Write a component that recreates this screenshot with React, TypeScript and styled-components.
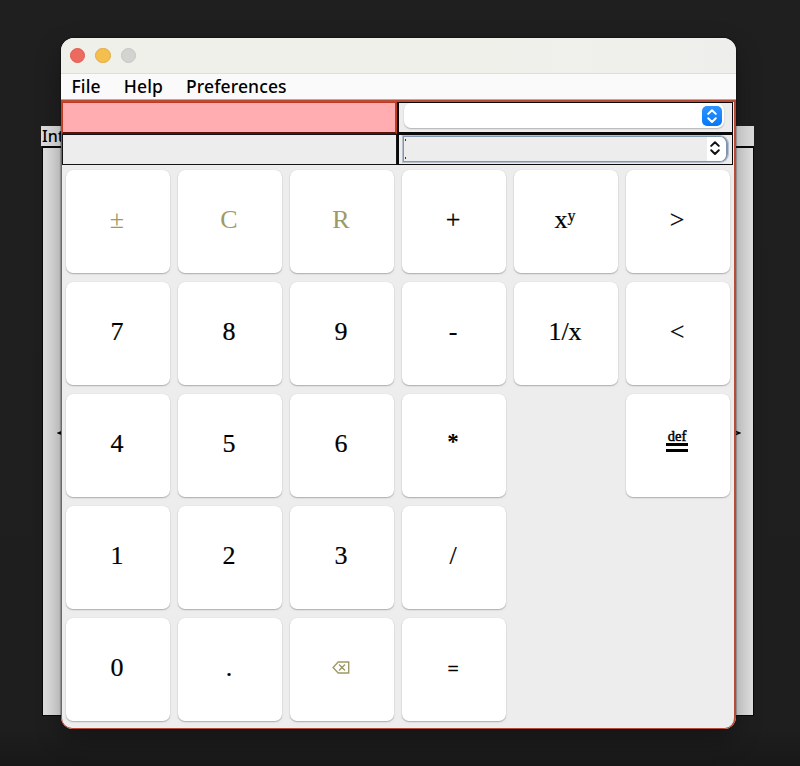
import React from "react";
import styled, { createGlobalStyle } from "styled-components";

const GlobalStyle = createGlobalStyle`
  * { box-sizing: border-box; }
  html, body { margin: 0; background: #1d1d1d; }
`;

const Desktop = styled.div`
  position: relative;
  width: 800px;
  height: 766px;
  padding: 38px 64px 0 61px;
  overflow: hidden;
  background: linear-gradient(#1f1f1f, #1e1e1e 95%, #181818);
  font-family: "Noto Sans", sans-serif;
  color: #000;
`;

/* Partly hidden window lying behind the calculator */
const BackWindow = styled.div`
  position: absolute;
  left: 41px;
  top: 126px;
  width: 713px;
  height: 591px;
`;

const BackTitle = styled.div`
  height: 20px;
  padding-left: 1px;
  background: #dedede;
  font-size: 16px;
  font-weight: 500;
  line-height: 20px;
`;

const BackBody = styled.div`
  display: flex;
  justify-content: space-between;
  align-items: flex-start;
  height: 570px;
  margin: 0 0 0 1px;
  padding: 282px 12px 0 14px;
  border: solid #080808;
  border-width: 2px 1px 1px 1px;
  background: linear-gradient(90deg, #e2e2e2, #d6d6d6 20px, #d6d6d6 690px, #e2e2e2);
`;

const Window = styled.main`
  position: relative;
  width: 675px;
  height: 691px;
  border-radius: 13px 13px 12px 12px;
  overflow: hidden;
  background: #ededed;
`;

const Shadow = styled.div`
  position: relative;
  border-radius: 13px;
  box-shadow: 0 0 1px 1px rgba(0, 0, 0, 0.25), 0 10px 26px rgba(0, 0, 0, 0.3);
`;

const TitleBar = styled.header`
  display: flex;
  align-items: center;
  gap: 10px;
  height: 36px;
  padding-left: 9px;
  background: linear-gradient(90deg, #f0f0eb 65%, #eeeeec);
  border-bottom: 1px solid #dededb;
`;

const Light = styled.span<{ $fill: string; $edge: string }>`
  width: 15.4px;
  height: 15.4px;
  border-radius: 50%;
  background: ${(p) => p.$fill};
  border: 1px solid ${(p) => p.$edge};
`;

const MenuBar = styled.nav`
  display: flex;
  gap: 23px;
  height: 26px;
  padding-left: 10.5px;
  background: #fafafa;
  border-bottom: 1px solid #b5aaa8;
  font-size: 17.5px;
  font-weight: 500;
  line-height: 25px;
  letter-spacing: 0.13px;
`;

const Content = styled.section`
  height: 629px;
  border: solid #b84a38;
  border-width: 2px 2px 1px 1px;
  border-radius: 0 0 11px 11px;
`;

const Fields = styled.div`
  display: grid;
  grid-template-columns: 335px 336px;
  grid-template-rows: 32px 31px;
`;

const ErrorField = styled.div`
  border: 2px solid #c03a22;
  border-top-width: 1px;
  border-bottom: 2px solid #5a1309;
  border-left-width: 1px;
  background: #ffadb0;
`;

const PlainField = styled.div`
  border: 1px solid #161616;
  background: #ededed;
`;

const ComboCell = styled.div<{ $top?: boolean }>`
  border: solid #0a0a0a;
  border-width: ${(p) => (p.$top ? "1px 1px 2px 2px" : "1px 1px 1px 2px")};
  padding: ${(p) => (p.$top ? "0 8px 0 5px" : "1px 4px 0 4px")};
`;

const Combo = styled.div`
  display: flex;
  justify-content: flex-end;
  align-items: center;
  height: 25px;
  padding-right: 2px;
  border-radius: 7px;
  background: #fff;
  box-shadow: 0 1px 1.5px rgba(0, 0, 0, 0.25);
`;

const Knob = styled.span`
  display: flex;
  width: 20px;
  height: 20px;
  border-radius: 5px;
  background: linear-gradient(#2e94ff, #0877f8);
  color: #fff;
`;

const FocusCombo = styled.div`
  display: flex;
  justify-content: space-between;
  height: 26px;
  border: 1px solid #8296af;
  border-right-width: 2px;
  border-radius: 0 8px 8px 0;
  box-shadow: 0 0 0 1px #b5c0ce;
  overflow: hidden;
`;

const Dots = styled.span`
  display: flex;
  flex-direction: column;
  justify-content: space-between;
  padding: 2px 0 2px 1px;
  &::before, &::after {
    content: "";
    width: 1px;
    height: 2px;
    background: #333;
  }
`;

const Stepper = styled.span`
  display: flex;
  align-items: center;
  width: 19px;
  background: #fff;
  color: #111;
  & > svg {
    flex: none;
    margin: -2px 0 0 -2px;
  }
`;

const Keys = styled.div`
  display: grid;
  grid-template-columns: repeat(6, 104px);
  grid-auto-rows: 103px;
  column-gap: 8px;
  row-gap: 9px;
  padding: 5px 0 0 3.5px;
`;

const Key = styled.button<{ $col: number; $row: number; $muted?: boolean }>`
  grid-column: ${(p) => p.$col};
  grid-row: ${(p) => p.$row};
  display: flex;
  justify-content: center;
  align-items: center;
  padding: 0 1px 4px 0;
  border: 0;
  border-radius: 7px;
  background: #fff;
  box-shadow: 0 1px 1.5px rgba(0, 0, 0, 0.27), 0 0 1px rgba(0, 0, 0, 0.12);
  color: ${(p) => (p.$muted ? "#9e9966" : "#000")};
  font: 26px/30px "Liberation Serif", serif;
  -webkit-text-stroke: ${(p) => (p.$muted ? "0" : "0.2px")} currentColor;
`;

const Power = styled.span`
  & > sup {
    font-size: 16px;
    line-height: 0;
    vertical-align: 7px;
  }
`;

const Small = styled.span`
  position: relative;
  top: 1px;
  font-size: 19px;
  -webkit-text-stroke: 0.6px #000;
`;

const Star = styled.span`
  padding-bottom: 4px;
  font-weight: bold;
  font-size: 23px;
  -webkit-text-stroke: 0;
`;

const Define = styled.span`
  display: flex;
  flex-direction: column;
  align-items: center;
  width: 22px;
  margin-top: -6px;
  border-bottom: 3px solid #000;
  font-size: 14.5px;
  line-height: 13px;
  -webkit-text-stroke: 0.5px #000;
  &::after {
    content: "";
    width: 22px;
    height: 3px;
    margin: 0 0 3px;
    background: #000;
  }
`;

const Chevrons = () => (
  <svg width="20" height="20" viewBox="0 0 20 20" fill="none" stroke="currentColor" strokeWidth="2" strokeLinecap="round" strokeLinejoin="round">
    <path d="M6.2 7.9 10 4.2l3.8 3.7M6.2 12.3l3.8 3.7 3.8-3.7" />
  </svg>
);

const Arrow = ({ left }: { left?: boolean }) => (
  <svg width="7" height="6" viewBox="0 0 7 6" fill="none" stroke="#000" strokeWidth="1.5">
    <path d={left ? "M7 .8 1.5 3 7 5.2M3 3h4" : "M0 .8 5.5 3 0 5.2"} />
  </svg>
);

const Backspace = () => (
  <svg width="18" height="13" viewBox="0 0 18 13" fill="none" stroke="currentColor" strokeWidth="1.4">
    <path d="M6.2 1H16.7v11H6.2L1.1 6.5zM7 3.6l6 5.8M13 3.6 7 9.4" />
  </svg>
);

type KeyDef = { id: string; label: React.ReactNode; col: number; row: number; muted?: boolean };

const plain = (text: string, col: number, row: number, muted = false): KeyDef => ({
  id: text, label: text, col, row, muted,
});

const keys: KeyDef[] = [
  plain("±", 1, 1, true), plain("C", 2, 1, true), plain("R", 3, 1, true), plain("+", 4, 1),
  { id: "power", label: <Power>x<sup>y</sup></Power>, col: 5, row: 1 },
  plain(">", 6, 1),
  plain("7", 1, 2), plain("8", 2, 2), plain("9", 3, 2), plain("-", 4, 2), plain("1/x", 5, 2), plain("<", 6, 2),
  plain("4", 1, 3), plain("5", 2, 3), plain("6", 3, 3),
  { id: "times", label: <Star>*</Star>, col: 4, row: 3 },
  { id: "define", label: <Define>def</Define>, col: 6, row: 3 },
  plain("1", 1, 4), plain("2", 2, 4), plain("3", 3, 4), plain("/", 4, 4),
  plain("0", 1, 5), plain(".", 2, 5),
  { id: "backspace", label: <Backspace />, col: 3, row: 5, muted: true },
  { id: "equals", label: <Small>=</Small>, col: 4, row: 5 },
];

export default function App() {
  return (
    <Desktop>
      <GlobalStyle />
      <BackWindow>
        <BackTitle>Int</BackTitle>
        <BackBody><Arrow left /><Arrow /></BackBody>
      </BackWindow>
      <Shadow>
        <Window>
          <TitleBar>
            <Light $fill="#ed6a5f" $edge="#dc5d52" />
            <Light $fill="#f5bf4f" $edge="#deaa42" />
            <Light $fill="#d3d3d1" $edge="#c4c4c2" />
          </TitleBar>
          <MenuBar>
            <span>File</span>
            <span>Help</span>
            <span>Preferences</span>
          </MenuBar>
          <Content>
            <Fields>
              <ErrorField />
              <ComboCell $top>
                <Combo><Knob><Chevrons /></Knob></Combo>
              </ComboCell>
              <PlainField />
              <ComboCell>
                <FocusCombo>
                  <Dots />
                  <Stepper><Chevrons /></Stepper>
                </FocusCombo>
              </ComboCell>
            </Fields>
            <Keys>
              {keys.map((k) => (
                <Key key={k.id} $col={k.col} $row={k.row} $muted={k.muted}>{k.label}</Key>
              ))}
            </Keys>
          </Content>
        </Window>
      </Shadow>
    </Desktop>
  );
}
